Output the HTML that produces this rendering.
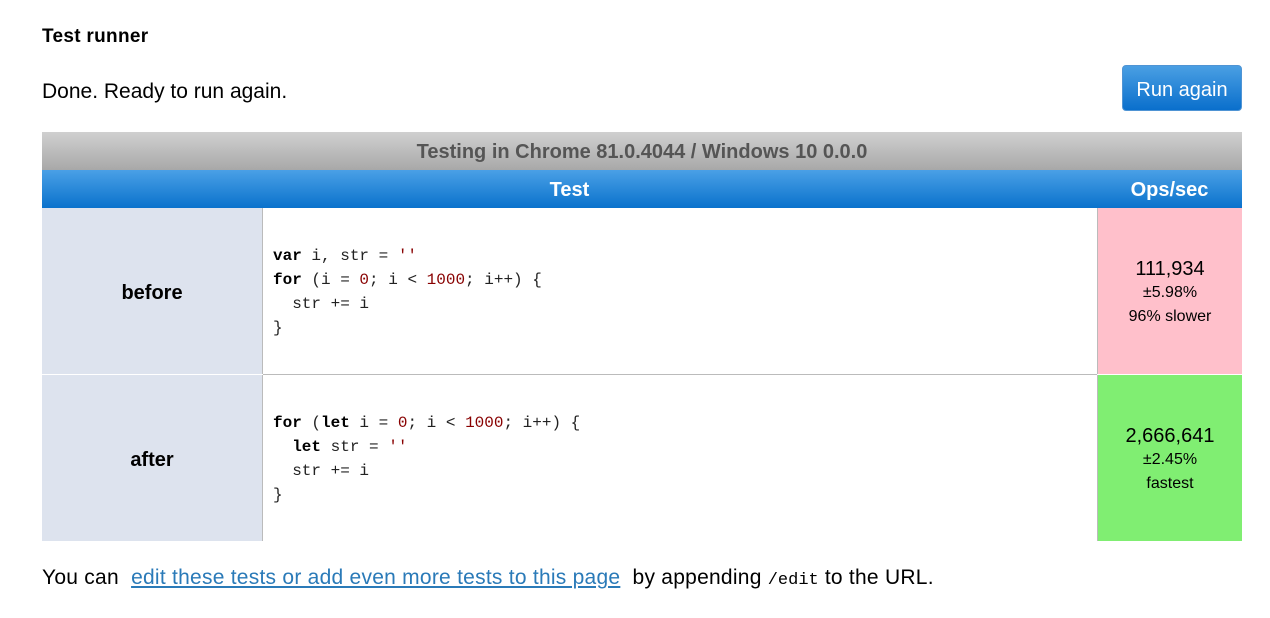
<!DOCTYPE html><html><head><style>
body{margin:0;background:#fff;font-family:"Liberation Sans",sans-serif;color:#000;width:1270px;height:618px;overflow:hidden;position:relative}
.a{position:absolute}
h1{position:absolute;left:42px;top:26px;margin:0;font-size:19px;font-weight:bold;letter-spacing:0.3px}
.btn{left:1122px;top:65px;width:120px;height:46px;border-radius:4px;background:linear-gradient(#4a9fe3,#0a6fcc);border:1px solid #4f94d4;box-sizing:border-box;color:#fff;font-size:20px;text-align:center;line-height:48px}
.gray{left:42px;top:132px;width:1200px;height:38px;background:linear-gradient(#d0d0d0,#a8a8a8);color:#555;font-weight:bold;font-size:20px;text-align:center;line-height:41px}
.blue{top:170px;height:38px;background:linear-gradient(#4aa0e6,#0a72cc);color:#fff;font-weight:bold;font-size:20px;text-align:center;line-height:41px}
.name{left:42px;width:220px;height:166px;background:#dde3ee;font-weight:bold;font-size:20px;text-align:center;line-height:170px;border-right:1px solid #bbb}
.code{left:263px;width:833px;height:166px;background:#fff}
pre{margin:0;position:absolute;left:10px;font-family:"Liberation Mono",monospace;font-size:16px;line-height:24px;color:#222}
b{color:#000}.n{color:#800}
.ops{left:1097px;width:145px;height:166px;text-align:center;font-size:16px;line-height:24px;border-left:1px solid #bbb;box-sizing:border-box}
.ops .big{font-size:20px;line-height:24px}
</style></head><body>
<h1>Test runner</h1>
<div class="a" style="left:42px;top:80px;font-size:21px">Done. Ready to run again.</div>
<div class="a btn">Run again</div>
<div class="a gray">Testing in Chrome 81.0.4044 / Windows 10 0.0.0</div>
<div class="a blue" style="left:42px;width:1055px">Test</div>
<div class="a blue" style="left:1097px;width:145px">Ops/sec</div>
<div class="a name" style="top:208px">before</div>
<div class="a code" style="top:208px"><pre style="top:36px"><b>var</b> i, str = <span class="n">''</span>
<b>for</b> (i = <span class="n">0</span>; i &lt; <span class="n">1000</span>; i++) {
  str += i
}</pre></div>
<div class="a ops" style="top:208px;background:#ffc0cb;padding-top:49px"><div class="big">111,934</div>±5.98%<br>96% slower</div>
<div class="a" style="left:263px;top:374px;width:834px;height:1px;background:#bbb"></div>
<div class="a name" style="top:375px">after</div>
<div class="a code" style="top:375px"><pre style="top:36px"><b>for</b> (<b>let</b> i = <span class="n">0</span>; i &lt; <span class="n">1000</span>; i++) {
  <b>let</b> str = <span class="n">''</span>
  str += i
}</pre></div>
<div class="a ops" style="top:375px;background:#80ee72;padding-top:49px"><div class="big">2,666,641</div>±2.45%<br>fastest</div>
<div class="a" style="left:42px;top:566px;font-size:21px;letter-spacing:0.25px;white-space:nowrap">You can &nbsp;<span style="color:#2a7ab8;text-decoration:underline">edit these tests or add even more tests to this page</span>&nbsp; by appending <span style="font-family:'Liberation Mono',monospace;font-size:17px;letter-spacing:0">/edit</span> to the URL.</div>
</body></html>
